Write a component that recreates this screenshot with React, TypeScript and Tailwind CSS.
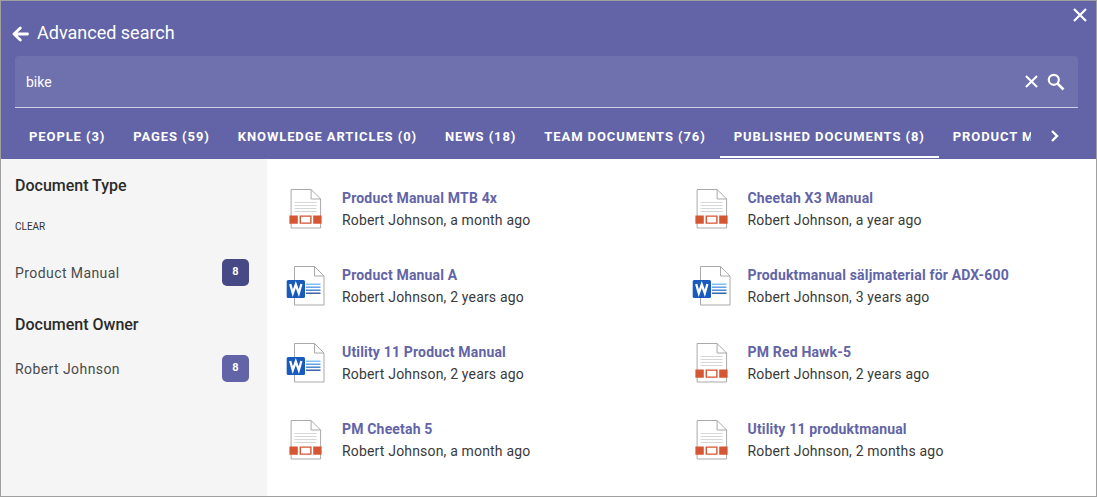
import { useState } from "react";

type Kind = "sheet" | "word";

interface Doc {
  title: string;
  author: string;
  age: string;
  kind: Kind;
}

const tabs = [
  "People (3)",
  "Pages (59)",
  "Knowledge articles (0)",
  "News (18)",
  "Team documents (76)",
  "Published documents (8)",
  "Product manuals (8)",
];

const docs: Doc[] = [
  { title: "Product Manual MTB 4x", author: "Robert Johnson", age: "a month ago", kind: "sheet" },
  { title: "Cheetah X3 Manual", author: "Robert Johnson", age: "a year ago", kind: "sheet" },
  { title: "Product Manual A", author: "Robert Johnson", age: "2 years ago", kind: "word" },
  { title: "Produktmanual säljmaterial för ADX-600", author: "Robert Johnson", age: "3 years ago", kind: "word" },
  { title: "Utility 11 Product Manual", author: "Robert Johnson", age: "2 years ago", kind: "word" },
  { title: "PM Red Hawk-5", author: "Robert Johnson", age: "2 years ago", kind: "sheet" },
  { title: "PM Cheetah 5", author: "Robert Johnson", age: "a month ago", kind: "sheet" },
  { title: "Utility 11 produktmanual", author: "Robert Johnson", age: "2 months ago", kind: "sheet" },
];

function CloseIcon({ className }: { className: string }) {
  return (
    <svg viewBox="0 0 14 14" className={className} fill="none" stroke="currentColor" strokeWidth="2.2" aria-hidden="true">
      <path d="M1 1l12 12M13 1L1 13" />
    </svg>
  );
}

function SheetIcon() {
  return (
    <svg viewBox="0 0 40 40" className="size-10 shrink-0" aria-hidden="true">
      <path d="M5.100.5h20l9.500 9.500v29h-29.500z" fill="#fff" stroke="#a9a9a9" />
      <path d="M25.100.5v9.500h9.500" fill="none" stroke="#a9a9a9" />
      <path d="M8.500 13.500h22M8.500 16.500h22M8.500 19.500h22M8.500 22.500h22" stroke="#d6d6d6" />
      <path d="M3.400 26.400h8.400v8.400h-8.400zM27.200 26.400h8.400v8.400h-8.400z" fill="#d65532" />
      <path d="M14.300 27.100h10.600v7h-10.600z" fill="#fff" stroke="#d65532" strokeWidth="1.400" />
    </svg>
  );
}

function WordIcon() {
  return (
    <svg viewBox="0 0 40 40" className="size-10 shrink-0" aria-hidden="true">
      <path d="M8.500.5h20l9.500 9.500v29h-29.500z" fill="#fff" stroke="#a9a9a9" />
      <path d="M28.500.5v9.500h9.500" fill="none" stroke="#a9a9a9" />
      <path d="M20 18.200h14.500" stroke="#6fb7ef" strokeWidth="1.300" />
      <path d="M20 21.200h14.500" stroke="#4a94e6" strokeWidth="1.300" />
      <path d="M20 24.200h14.500" stroke="#2b72cc" strokeWidth="1.300" />
      <path d="M20 27.200h14.500" stroke="#1c4a9c" strokeWidth="1.300" />
      <rect x="0.700" y="14" width="18.300" height="18" rx="1.500" fill="#185abd" />
      <path d="M4.200 18l2.600 9.200 3-8.600 3 8.600 2.600-9.200" fill="none" stroke="#fff" strokeWidth="2.300" />
    </svg>
  );
}

function Filter({ title, item, count, selected }: { title: string; item: string; count: number; selected?: boolean }) {
  return (
    <section>
      <h2 className="text-base leading-6 font-medium text-[#2b2b2b]">{title}</h2>
      {selected && (
        <button type="button" className="mt-[21px] block text-[10px] leading-4 uppercase text-[#333]">
          Clear
        </button>
      )}
      <button
        type="button"
        className={`flex w-full items-center justify-between text-sm tracking-[0.03em] text-[#4a4a4a] ${selected ? "mt-6" : "mt-[18px]"}`}
      >
        <span>{item}</span>
        <span
          className={`flex size-[27px] justify-center rounded-[5px] pt-1 text-[11px] leading-[18px] font-bold text-white ${
            selected ? "bg-[#464985]" : "bg-[#6264a7]"
          }`}
        >
          {count}
        </span>
      </button>
    </section>
  );
}

export default function App() {
  const [query, setQuery] = useState("bike");
  const [active, setActive] = useState(5);

  return (
    <div className="flex min-h-screen flex-col border border-[#a0a0a0] bg-white font-[Roboto,sans-serif]">
      <header className="relative bg-[#6264a7] pt-5 text-white">
        <button type="button" aria-label="Close" className="absolute top-[7px] right-[9px]">
          <CloseIcon className="size-[14px]" />
        </button>
        <div className="flex items-center gap-2 pl-[11px]">
          <button type="button" aria-label="Back" className="pt-0.5">
            <svg
              viewBox="0 0 17 16"
              className="h-4 w-[17px]"
              fill="none"
              stroke="currentColor"
              strokeWidth="2.800"
              strokeLinecap="round"
              strokeLinejoin="round"
              aria-hidden="true"
            >
              <path d="M8.300 1.900L2 8l6.300 6.100M2.500 8h13" />
            </svg>
          </button>
          <h1 className="text-lg leading-6">Advanced search</h1>
        </div>

        <form
          role="search"
          onSubmit={(e) => e.preventDefault()}
          className="mt-[11px] mr-[18px] ml-[14px] flex h-[52px] items-center rounded-t border-b border-[#d0d0e5] bg-[#6f71af] pr-[13px] pl-[11px]"
        >
          <input
            type="text"
            aria-label="Search"
            value={query}
            onChange={(e) => setQuery(e.target.value)}
            className="min-w-0 flex-1 bg-transparent text-sm leading-5 outline-none"
          />
          <button type="button" aria-label="Clear search" onClick={() => setQuery("")}>
            <CloseIcon className="size-[13px]" />
          </button>
          <button type="submit" aria-label="Search" className="ml-[9px]">
            <svg viewBox="0 0 18 18" className="size-[18px]" fill="none" stroke="currentColor" strokeWidth="2.200" aria-hidden="true">
              <circle cx="6.800" cy="6.800" r="5" />
              <path d="M10.600 10.600l5.900 5.900" strokeWidth="2.600" />
            </svg>
          </button>
        </form>

        <nav className="mr-[18px] ml-[14px] flex h-[51px] items-stretch">
          <div role="tablist" className="flex min-w-0 flex-1 overflow-hidden pb-px">
            {tabs.map((t, i) => (
              <button
                key={t}
                type="button"
                role="tab"
                aria-selected={i === active}
                onClick={() => setActive(i)}
                className={`shrink-0 border-b-2 px-[14px] pt-2.5 text-[13px] leading-5 font-bold tracking-[0.07em] whitespace-nowrap uppercase ${
                  i === active ? "border-white" : "border-transparent"
                }`}
              >
                {t}
              </button>
            ))}
          </div>
          <button type="button" aria-label="More tabs" className="flex w-[47px] items-center justify-center pt-1">
            <svg viewBox="0 0 8 12" className="h-3 w-2" fill="none" stroke="currentColor" strokeWidth="2.400" aria-hidden="true">
              <path d="M1 1l5 5-5 5" />
            </svg>
          </button>
        </nav>
      </header>

      <div className="flex flex-1">
        <aside className="flex w-[266px] shrink-0 flex-col gap-[27px] bg-[#f5f5f5] pt-[15px] pr-[18px] pl-[14px]">
          <Filter title="Document Type" item="Product Manual" count={8} selected />
          <Filter title="Document Owner" item="Robert Johnson" count={8} />
        </aside>
        <main className="min-w-0 flex-1 px-[9px] pt-7">
          <ul className="grid grid-cols-2 gap-y-[33px]">
            {docs.map((d) => (
              <li key={d.title} className="flex items-start gap-4 pl-2.5">
                <div className="pt-0.5">{d.kind === "word" ? <WordIcon /> : <SheetIcon />}</div>
                <div className="h-11 min-w-0 text-sm leading-[22px] tracking-[0.0125em]">
                  <a href="#" className="block truncate font-bold text-[#6264a7]">
                    {d.title}
                  </a>
                  <p className="truncate text-[#3a3a3a]">
                    {d.author}, {d.age}
                  </p>
                </div>
              </li>
            ))}
          </ul>
        </main>
      </div>
    </div>
  );
}
